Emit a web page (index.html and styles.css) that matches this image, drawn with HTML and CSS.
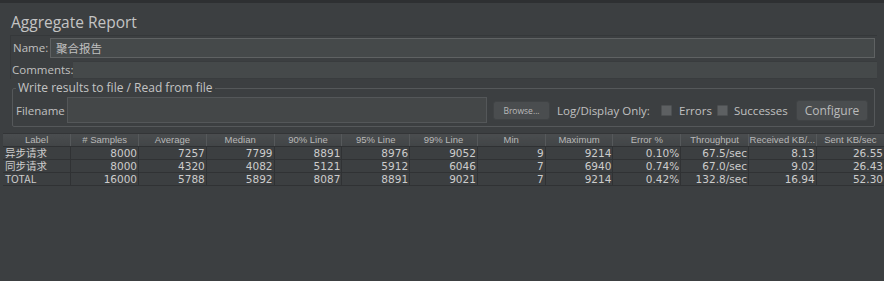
FILE: index.html
```html
<!DOCTYPE html>
<html>
<head>
<meta charset="utf-8">
<link rel="stylesheet" href="styles.css">
</head>
<body>
<div class="app">
  <div class="title">Aggregate Report</div>
  <div class="form">
    <div class="row row-name">
      <span class="lbl lbl-name">Name:</span>
      <div class="field field-name">聚合报告</div>
    </div>
    <div class="row row-comments">
      <span class="lbl lbl-comments">Comments:</span>
      <div class="field field-comments"></div>
    </div>
  </div>
  <fieldset class="filebox">
    <legend>Write results to file / Read from file</legend>
    <div class="filerow">
      <span class="lbl lbl-file">Filename</span>
      <div class="field field-file"></div>
      <button class="btn btn-small">Browse...</button>
      <span class="lbl lbl-log">Log/Display Only:</span>
      <span class="check"></span><span class="lbl lbl-err">Errors</span>
      <span class="check check2"></span><span class="lbl lbl-succ">Successes</span>
      <button class="btn btn-config">Configure</button>
    </div>
  </fieldset>
  <div class="tablewrap">
    <table class="grid">
      <thead>
        <tr>
          <th>Label</th><th># Samples</th><th>Average</th><th>Median</th><th>90% Line</th><th>95% Line</th><th>99% Line</th><th>Min</th><th>Maximum</th><th>Error %</th><th>Throughput</th><th>Received KB/...</th><th>Sent KB/sec</th>
        </tr>
      </thead>
      <tbody>
        <tr><td class="l">异步请求</td><td>8000</td><td>7257</td><td>7799</td><td>8891</td><td>8976</td><td>9052</td><td>9</td><td>9214</td><td>0.10%</td><td>67.5/sec</td><td>8.13</td><td>26.55</td></tr>
        <tr><td class="l">同步请求</td><td>8000</td><td>4320</td><td>4082</td><td>5121</td><td>5912</td><td>6046</td><td>7</td><td>6940</td><td>0.74%</td><td>67.0/sec</td><td>9.02</td><td>26.43</td></tr>
        <tr><td class="l">TOTAL</td><td>16000</td><td>5788</td><td>5892</td><td>8087</td><td>8891</td><td>9021</td><td>7</td><td>9214</td><td>0.42%</td><td>132.8/sec</td><td>16.94</td><td>52.30</td></tr>
      </tbody>
    </table>
  </div>
</div>
</body>
</html>
```
FILE: styles.css
```css
html, body {
  margin: 0;
  padding: 0;
  background: #3c3f41;
}
body {
  width: 884px;
  height: 281px;
  overflow: hidden;
  font-family: "DejaVu Sans", "Noto Sans CJK SC", sans-serif;
  color: #bbbbbb;
}
.app {
  border-top: 3px solid #2e3032;
  height: 278px;
  display: flex;
  flex-direction: column;
}
.title {
  height: 31px;
  padding-left: 11px;
  font-family: "Open Sans", "DejaVu Sans", sans-serif;
  font-size: 15.5px;
  line-height: 39px;
  color: #c4c4c4;
  white-space: nowrap;
}
.form {
  margin: 1px 0 0 10px;
  width: 866px;
  border-top: 1px solid #35383a;
  border-left: 1px solid #35383a;
}
.row {
  display: flex;
  align-items: center;
}
.lbl {
  font-family: "Open Sans", "DejaVu Sans", sans-serif;
  font-size: 11.5px;
  color: #c0c0c0;
  white-space: nowrap;
  flex: none;
}
.lbl-name {
  width: 37px;
  padding-left: 2px;
}
.lbl-comments {
  width: 61px;
  padding-left: 1px;
}
.row-name {
  height: 23px;
}
.field {
  background: #45494a;
  box-sizing: border-box;
}
.field-name {
  flex: 1;
  margin: 0 2px 0 0;
  height: 20px;
  border: 1px solid #5f6263;
  font-family: "Noto Sans CJK SC", sans-serif;
  font-size: 11.5px;
  line-height: 18px;
  padding-left: 5px;
  color: #c0c0c0;
}
.row-comments {
  height: 19px;
  margin-top: 1px;
}
.field-comments {
  flex: 1;
  height: 18px;
  border-top: 1px solid #393c3e;
  border-bottom: 1px solid #393c3e;
}
.filebox {
  margin: 3px 0 0 12px;
  width: 863px;
  padding: 3px 3px 3px 3px;
  border: 1px solid #55585a;
  border-radius: 2px;
  box-sizing: border-box;
}
.filebox legend {
  font-family: "Open Sans", "DejaVu Sans", sans-serif;
  font-size: 12px;
  color: #c4c4c4;
  padding: 0 2px;
  margin-left: 0;
  line-height: 12px;
  height: 12px;
}
.filerow {
  display: flex;
  align-items: center;
  height: 26px;
}
.lbl-file {
  width: 51px;
}
.field-file {
  width: 420px;
  height: 26px;
  border: 1px solid #545759;
  background: #444748;
  flex: none;
}
.btn {
  background: #4a4d4f;
  border: 1px solid #404345;
  border-radius: 3px;
  color: #bbbbbb;
  padding: 0;
  box-sizing: border-box;
  font-family: "Open Sans", "DejaVu Sans", sans-serif;
  flex: none;
}
.btn-small {
  margin-left: 6px;
  width: 57px;
  height: 19px;
  font-size: 8.5px;
}
.lbl-log {
  margin-left: 7px;
  width: 104px;
}
.check {
  width: 11px;
  height: 11px;
  background: #5d6062;
  border: 1px solid #4d5052;
  border-radius: 1px;
  box-sizing: border-box;
  flex: none;
}
.lbl-err {
  margin-left: 7px;
  width: 38px;
}
.lbl-succ {
  margin-left: 6px;
  width: 62px;
}
.btn-config {
  width: 72px;
  height: 21px;
  font-size: 12px;
}
.tablewrap {
  margin-top: 6px;
  flex: 1;
  margin-left: 3px;
  border-top: 1px solid #333537;
}
.grid {
  width: 881px;
  table-layout: fixed;
  border-collapse: collapse;
  font-family: "DejaVu Sans", "Noto Sans CJK SC", sans-serif;
}
.grid th {
  height: 12px;
  padding: 0;
  font-family: "Liberation Sans", "DejaVu Sans", sans-serif;
  font-weight: normal;
  font-size: 9.5px;
  line-height: 12px;
  color: #b8b8b8;
  background: linear-gradient(#4a4d4f, #424547);
  border-left: 1px solid #56595b;
  border-bottom: 1px solid #2f3133;
  text-align: center;
  white-space: nowrap;
  overflow: hidden;
}
.grid th:first-child {
  border-left: none;
}
.grid td {
  height: 12px;
  padding: 0 1px 0 0;
  font-size: 10.5px;
  line-height: 12px;
  text-align: right;
  color: #cccccc;
  border-left: 1px solid #303234;
  border-bottom: 1px solid #303234;
  white-space: nowrap;
  overflow: hidden;
}
.grid td.l {
  text-align: left;
  padding-left: 2px;
  font-family: "Noto Sans CJK SC", "DejaVu Sans", sans-serif;
  font-size: 10.5px;
  line-height: 12px;
  border-left: none;
}
```
